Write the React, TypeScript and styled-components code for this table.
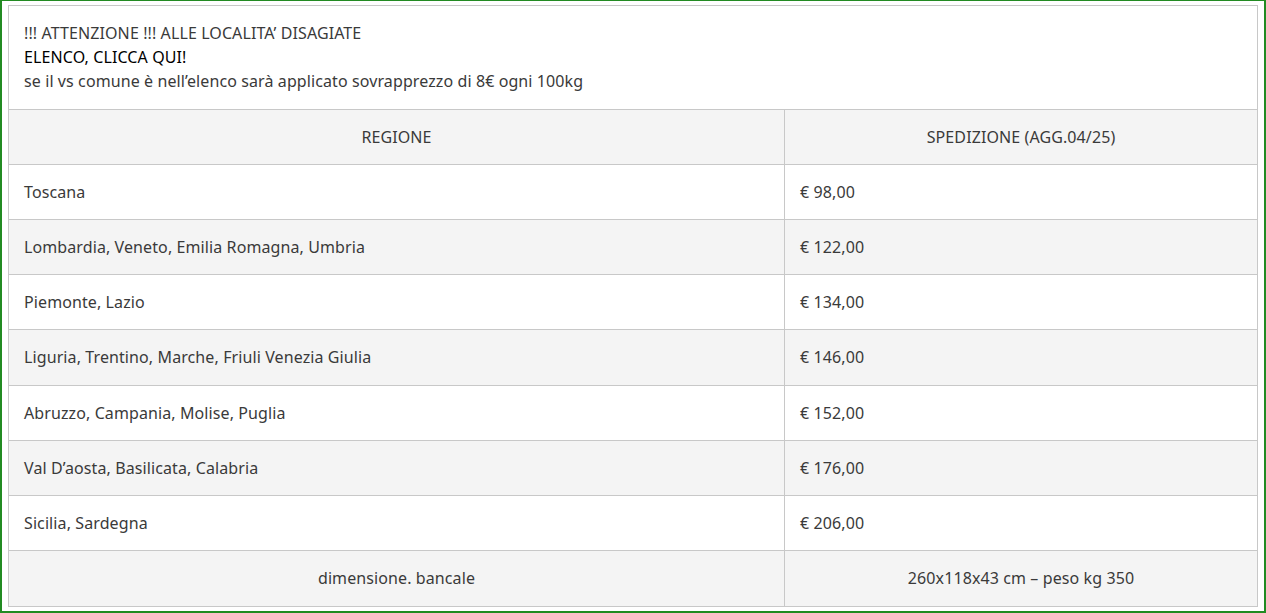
import React from "react";
import styled, { createGlobalStyle } from "styled-components";

const Global = createGlobalStyle`
  html, body { margin: 0; padding: 0; background: #fff; }
  #root { width: 1266px; height: 613px; }
  * { box-sizing: border-box; }
`;

const Frame = styled.div`
  width: 1266px;
  height: 613px;
  border: 2px solid #228b22;
  border-top-width: 1px;
  padding: 4px 6px;
  background: #fff;
  font-family: "Noto Sans", Lato, sans-serif;
  font-size: 16px;
  letter-spacing: 0.1px;
  color: #3a3a3a;
`;

const Box = styled.div`
  height: 100%;
  border: 1px solid #c8c8c8;
  display: flex;
  flex-direction: column;
`;

const Notice = styled.div`
  height: 104px;
  border-bottom: 1px solid #c8c8c8;
  padding: 15px 15px 0;
  line-height: 24px;
`;

const Line = styled.div``;

const Link = styled.a`
  color: #000;
  text-decoration: none;
  cursor: pointer;
`;

const Table = styled.div`
  flex: 1;
  display: grid;
  grid-template-rows: repeat(9, 1fr);
`;

const Row = styled.div<{ $shaded: boolean; $last?: boolean }>`
  display: grid;
  grid-template-columns: 776px 1fr;
  background: ${(p) => (p.$shaded ? "#f4f4f4" : "#fff")};
  border-bottom: ${(p) => (p.$last ? "none" : "1px solid #c8c8c8")};
`;

const Cell = styled.div<{ $center?: boolean; $divider?: boolean }>`
  display: flex;
  align-items: center;
  justify-content: ${(p) => (p.$center ? "center" : "flex-start")};
  padding: 0 15px;
  border-right: ${(p) => (p.$divider ? "1px solid #c8c8c8" : "none")};
`;

const rows: [string, string][] = [
  ["Toscana", "€ 98,00"],
  ["Lombardia, Veneto, Emilia Romagna, Umbria", "€ 122,00"],
  ["Piemonte, Lazio", "€ 134,00"],
  ["Liguria, Trentino, Marche, Friuli Venezia Giulia", "€ 146,00"],
  ["Abruzzo, Campania, Molise, Puglia", "€ 152,00"],
  ["Val D’aosta, Basilicata, Calabria", "€ 176,00"],
  ["Sicilia, Sardegna", "€ 206,00"],
];

export default function App() {
  return (
    <>
      <Global />
      <Frame>
        <Box>
          <Notice>
            <Line>!!! ATTENZIONE !!! ALLE LOCALITA’ DISAGIATE</Line>
            <Line>
              <Link>ELENCO, CLICCA QUI!</Link>
            </Line>
            <Line>se il vs comune è nell’elenco sarà applicato sovrapprezzo di 8€ ogni 100kg</Line>
          </Notice>
          <Table>
            <Row $shaded>
              <Cell $center $divider>REGIONE</Cell>
              <Cell $center>SPEDIZIONE (AGG.04/25)</Cell>
            </Row>
            {rows.map(([r, p], i) => (
              <Row key={r} $shaded={i % 2 === 1}>
                <Cell $divider>{r}</Cell>
                <Cell>{p}</Cell>
              </Row>
            ))}
            <Row $shaded $last>
              <Cell $center $divider>dimensione. bancale</Cell>
              <Cell $center>260x118x43 cm – peso kg 350</Cell>
            </Row>
          </Table>
        </Box>
      </Frame>
    </>
  );
}
